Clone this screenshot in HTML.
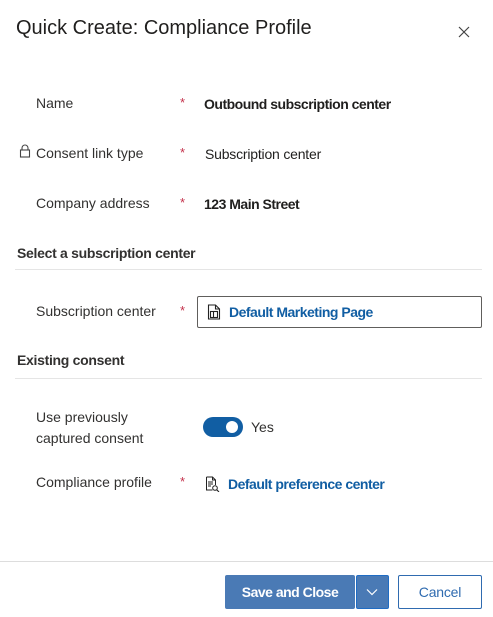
<!DOCTYPE html>
<html><head><meta charset="utf-8"><style>
*{margin:0;padding:0;box-sizing:border-box}
body{width:493px;height:617px;background:#fff;font-family:"Liberation Sans",sans-serif;color:#323130;position:relative;overflow:hidden}
.a{position:absolute;white-space:nowrap}
.lbl{font-size:14px;color:#323130}
.star{color:#c4314b;font-size:13px}
.val{font-size:14px;color:#201f1e;font-weight:bold;letter-spacing:-0.5px}
.link{font-size:14px;color:#115ea3;font-weight:bold;letter-spacing:-0.5px}
.sec{font-size:14px;font-weight:bold;color:#323130;letter-spacing:-0.3px}
.hr{position:absolute;left:15px;right:11px;height:1px;background:#e5e5e5}
</style></head><body>
<div class="a" style="left:16px;top:17px;font-size:20px;color:#201f1e">Quick Create: Compliance Profile</div>
<svg class="a" style="left:458px;top:26px" width="12" height="12" viewBox="0 0 12 12"><path d="M1 1L11 11M11 1L1 11" stroke="#444" stroke-width="1.2"/></svg>

<div class="a lbl" style="left:36px;top:95px">Name</div>
<div class="a star" style="left:180px;top:95px">*</div>
<div class="a val" style="left:204px;top:96px">Outbound subscription center</div>

<svg class="a" style="left:19px;top:144px" width="12" height="14" viewBox="0 0 12 14"><path d="M3 6V4a3 3 0 0 1 6 0v2" fill="none" stroke="#444" stroke-width="1.1"/><rect x="1.5" y="6" width="9" height="7" fill="none" stroke="#444" stroke-width="1.1"/></svg>
<div class="a lbl" style="left:36px;top:145px">Consent link type</div>
<div class="a star" style="left:180px;top:145px">*</div>
<div class="a val" style="left:205px;top:146px;font-weight:normal;letter-spacing:-0.2px">Subscription center</div>

<div class="a lbl" style="left:36px;top:195px">Company address</div>
<div class="a star" style="left:180px;top:195px">*</div>
<div class="a val" style="left:204px;top:196px">123 Main Street</div>

<div class="a sec" style="left:17px;top:245px">Select a subscription center</div>
<div class="hr" style="top:269px"></div>

<div class="a lbl" style="left:36px;top:303px">Subscription center</div>
<div class="a star" style="left:180px;top:303px">*</div>
<div class="a" style="left:197px;top:296px;width:285px;height:32px;border:1px solid #605e5c;border-radius:2px"></div>
<svg class="a" style="left:207px;top:304px" width="14" height="16" viewBox="0 0 14 16"><path d="M1.5 1h7l4 4v10h-11z M8.5 1v4h4" fill="none" stroke="#222" stroke-width="1.1"/><rect x="3.5" y="7.5" width="7" height="6" fill="none" stroke="#222" stroke-width="1.1"/><path d="M6.5 7.5v6" stroke="#222" stroke-width="1.1"/></svg>
<div class="a link" style="left:229px;top:304px">Default Marketing Page</div>

<div class="a sec" style="left:17px;top:352px">Existing consent</div>
<div class="hr" style="top:378px"></div>

<div class="a lbl" style="left:36px;top:407px;line-height:21px">Use previously<br>captured consent</div>
<div class="a" style="left:203px;top:417px;width:40px;height:20px;border-radius:10px;background:#115ea3"></div>
<div class="a" style="left:226px;top:421px;width:12px;height:12px;border-radius:6px;background:#fff"></div>
<div class="a lbl" style="left:251px;top:419px">Yes</div>

<div class="a lbl" style="left:36px;top:474px">Compliance profile</div>
<div class="a star" style="left:180px;top:474px">*</div>
<svg class="a" style="left:205px;top:476px" width="15" height="16" viewBox="0 0 15 16"><path d="M1.5 1h6l3 3v5 M1.5 1v13h6 M7.5 1v3h3" fill="none" stroke="#222" stroke-width="1"/><path d="M3 6h5M3 8h5M3 10h3" stroke="#222" stroke-width="1"/><circle cx="10" cy="12" r="2.3" fill="none" stroke="#222" stroke-width="1"/><path d="M11.7 13.7L14 16" stroke="#222" stroke-width="1.1"/></svg>
<div class="a link" style="left:228px;top:476px">Default preference center</div>

<div class="a" style="left:0;right:0;top:561px;height:1px;background:#ddd"></div>
<div class="a" style="left:225px;top:575px;width:130px;height:34px;background:#4a7ab5;border-radius:2px;color:#fff;font-weight:bold;font-size:14px;text-align:center;line-height:34px;letter-spacing:-0.5px">Save and Close</div>
<div class="a" style="left:356px;top:575px;width:33px;height:34px;background:#4a7ab5;border:1px solid #1f6cc4;border-radius:2px"></div>
<svg class="a" style="left:366px;top:588px" width="12" height="8" viewBox="0 0 12 8"><path d="M1 1.5l5 5 5-5" fill="none" stroke="#fff" stroke-width="1.2"/></svg>
<div class="a" style="left:398px;top:575px;width:84px;height:34px;border:1px solid #2f6bb0;border-radius:2px;color:#2f6bb0;font-size:14px;text-align:center;line-height:32px;letter-spacing:-0.2px">Cancel</div>
</body></html>
